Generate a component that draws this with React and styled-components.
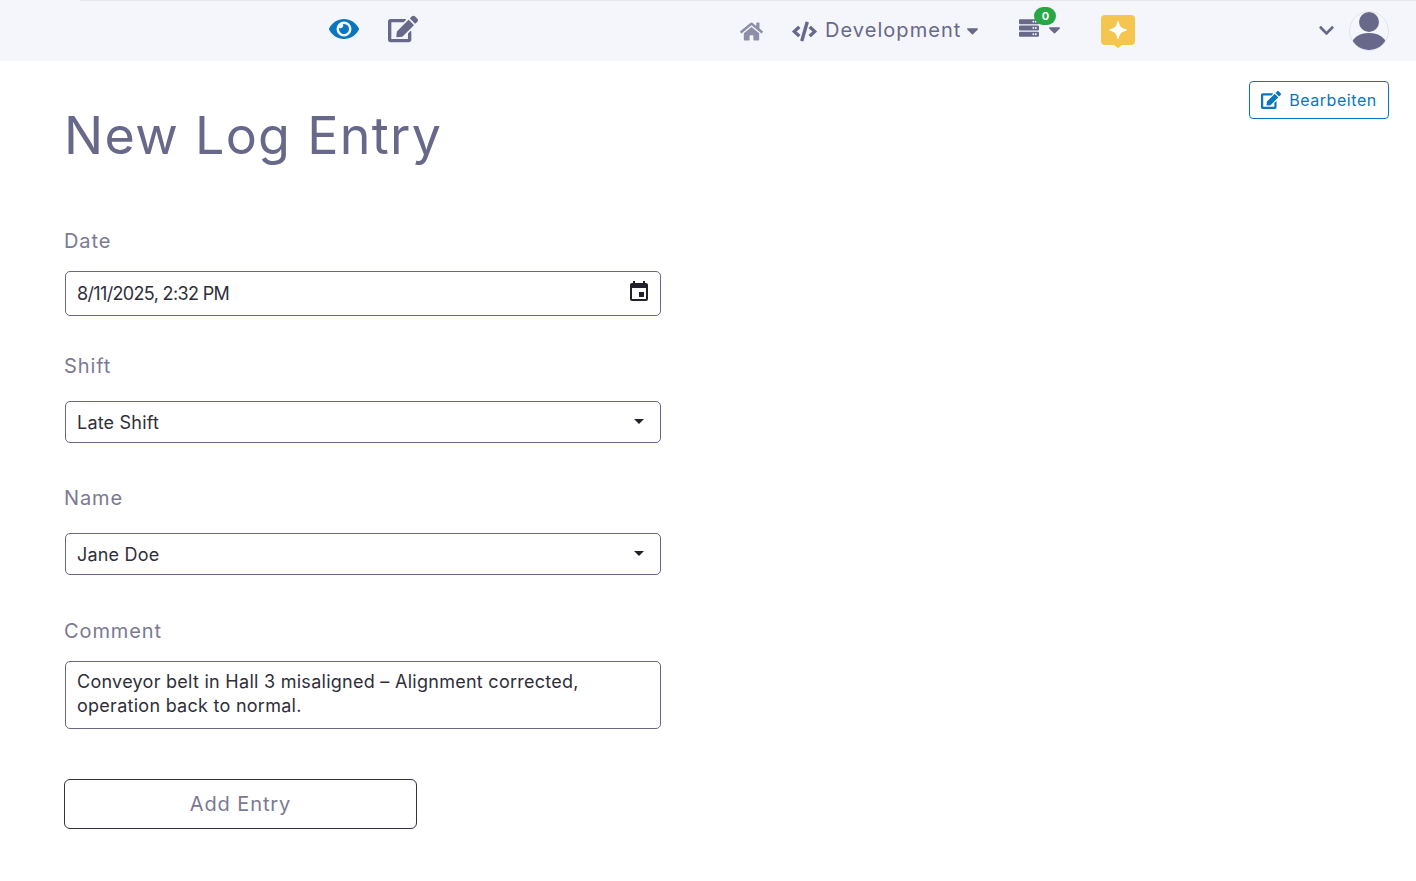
import React from "react";
import styled, {createGlobalStyle} from "styled-components";
import {FaEye, FaEdit, FaHome, FaCode, FaServer, FaCaretDown, FaChevronDown} from "react-icons/fa";
import {MdEvent} from "react-icons/md";

const FONT = `"Inter", "Liberation Sans", sans-serif`;

const GlobalStyle = createGlobalStyle`
  html, body {
    margin: 0;
    padding: 0;
    background: #fff;
    font-family: ${FONT};
  }
`;

const TopBar = styled.header`
  height: 61px;
  box-sizing: border-box;
  background: #f4f6fb;
  display: flex;
  align-items: center;
  color: #68688a;
  position: relative;
  padding-left: 329px;

  &::before {
    content: "";
    position: absolute;
    top: 0;
    left: 80px;
    right: 0;
    height: 1px;
    background: #e6e7ec;
  }
`;

const BarIcon = styled.span`
  display: flex;
  align-items: center;
  margin-left: ${p => p.$left || 0}px;
  font-size: ${p => p.$size}px;
  color: ${p => p.$color || "#68688a"};
  position: relative;
  top: ${p => p.$top || 0}px;
`;

const EnvName = styled.span`
  margin-left: 8px;
  font-size: 20px;
  font-weight: 400;
  letter-spacing: 1.05px;
  color: #68688a;
  position: relative;
  top: -1px;
`;

const Badge = styled.span`
  position: absolute;
  left: 15px;
  top: -11px;
  width: 22px;
  height: 18px;
  border-radius: 9px;
  background: #28a745;
  color: #fff;
  font-size: 11px;
  font-weight: 700;
  display: flex;
  align-items: center;
  justify-content: center;
`;

const Avatar = styled.span`
  width: 40px;
  height: 40px;
  box-sizing: border-box;
  border: 1px solid #e4e5ec;
  border-radius: 50%;
  overflow: hidden;
  margin-left: 14px;
  display: block;
  svg { display: block; }
`;

const Main = styled.main`
  display: flex;
  align-items: flex-start;
  padding: 20px 27px 0 64px;
`;

const FormColumn = styled.form`
  width: 597px;
  display: flex;
  flex-direction: column;
`;

const Title = styled.h1`
  margin: 21px 0 0 0;
  font-size: 52px;
  line-height: 68px;
  font-weight: 400;
  letter-spacing: 1.3px;
  color: #68688a;
`;

const Label = styled.label`
  display: block;
  margin-top: ${p => p.$top}px;
  margin-bottom: ${p => p.$bottom}px;
  font-size: 20px;
  line-height: 26px;
  letter-spacing: 0.9px;
  color: #7a7a94;
`;

const FieldWrap = styled.div`
  position: relative;
  margin-left: 1px;
`;

const fieldCss = `
  display: block;
  width: 100%;
  box-sizing: border-box;
  border: 1px solid #68688a;
  border-radius: 5px;
  background: #fff;
  padding: 0 11px;
  font-family: ${FONT};
  font-size: 18px;
  letter-spacing: 0.2px;
  color: #2f2f3a;
  outline: none;
`;

const TextInput = styled.input`
  ${fieldCss}
  height: 45px;
  letter-spacing: -0.65px;
`;

const Select = styled.select`
  ${fieldCss}
  height: 42px;
  appearance: none;
`;

const Comment = styled.textarea`
  ${fieldCss}
  height: 68px;
  padding: 8px 11px;
  line-height: 24px;
  letter-spacing: 0.27px;
  resize: none;
  overflow: hidden;
`;

const FieldIcon = styled.span`
  position: absolute;
  right: 10px;
  top: 9px;
  display: flex;
  font-size: 24px;
  color: #22222c;
  pointer-events: none;
`;

const Caret = styled.span`
  position: absolute;
  right: 17px;
  top: 18px;
  width: 0;
  height: 0;
  border-left: 5.5px solid transparent;
  border-right: 5.5px solid transparent;
  border-top: 5.5px solid #22222c;
  pointer-events: none;
`;

const AddButton = styled.button`
  width: 353px;
  height: 50px;
  margin-top: 50px;
  box-sizing: border-box;
  border: 1px solid #33333d;
  border-radius: 6px;
  background: #fff;
  font-family: ${FONT};
  font-size: 20px;
  letter-spacing: 0.9px;
  color: #7a7a94;
`;

const EditButton = styled.button`
  margin-left: auto;
  width: 140px;
  height: 38px;
  box-sizing: border-box;
  display: flex;
  align-items: center;
  justify-content: center;
  gap: 8px;
  border: 1px solid #0a76bd;
  border-radius: 4px;
  background: #fff;
  color: #0a76bd;
  font-family: ${FONT};
  font-size: 16px;
  letter-spacing: 0.55px;
  svg { font-size: 20px; }
`;

const Sparkle = () => (
    <svg width="36" height="34" viewBox="0 0 36 34">
        <path d="M5 1h26a4 4 0 0 1 4 4v22a4 4 0 0 1-4 4h-9l-4 3-4-3H5a4 4 0 0 1-4-4V5a4 4 0 0 1 4-4z" fill="#f5c64f"/>
        <path d="M18 8c.8 4.500 2.500 6.700 8 8-5.500 1.300-7.200 3.500-8 8-.8-4.500-2.500-6.700-8-8 5.500-1.300 7.200-3.500 8-8z" fill="#fff" stroke="#fff" strokeWidth="1.500" strokeLinejoin="round"/>
    </svg>
);

const UserFigure = () => (
    <svg width="38" height="38" viewBox="0 0 38 38">
        <circle cx="19" cy="10" r="10" fill="#68688a"/>
        <ellipse cx="19" cy="32" rx="17" ry="11" fill="#68688a"/>
    </svg>
);

const App = () => {
    return (
        <>
            <GlobalStyle/>
            <TopBar>
                <BarIcon $size={30} $color="#0a76bd" $top={-2}><FaEye/></BarIcon>
                <BarIcon $size={30} $left={29} $top={-2}><FaEdit/></BarIcon>
                <BarIcon $size={23} $left={322} $color="#8e8eaa" $top={1}><FaHome/></BarIcon>
                <BarIcon $size={25} $left={29} $top={1}><FaCode/></BarIcon>
                <EnvName>Development</EnvName>
                <BarIcon $size={19} $left={2} $top={0}><FaCaretDown/></BarIcon>
                <BarIcon $size={20} $left={37} $top={-3}>
                    <FaServer/>
                    <Badge>0</Badge>
                </BarIcon>
                <BarIcon $size={19} $left={6} $top={-1}><FaCaretDown/></BarIcon>
                <BarIcon $size={34} $left={36} $top={0}><Sparkle/></BarIcon>
                <BarIcon $size={17} $left={182} $top={0}><FaChevronDown/></BarIcon>
                <Avatar><UserFigure/></Avatar>
            </TopBar>
            <Main>
                <FormColumn>
                    <Title>New Log Entry</Title>
                    <Label $top={58} $bottom={17}>Date</Label>
                    <FieldWrap>
                        <TextInput defaultValue="8/11/2025, 2:32 PM"/>
                        <FieldIcon><MdEvent/></FieldIcon>
                    </FieldWrap>
                    <Label $top={37} $bottom={22}>Shift</Label>
                    <FieldWrap>
                        <Select defaultValue="Late Shift">
                            <option>Late Shift</option>
                            <option>Early Shift</option>
                        </Select>
                        <Caret/>
                    </FieldWrap>
                    <Label $top={42} $bottom={22}>Name</Label>
                    <FieldWrap>
                        <Select defaultValue="Jane Doe">
                            <option>Jane Doe</option>
                        </Select>
                        <Caret/>
                    </FieldWrap>
                    <Label $top={43} $bottom={17}>Comment</Label>
                    <FieldWrap>
                        <Comment defaultValue={"Conveyor belt in Hall 3 misaligned – Alignment corrected,\noperation back to normal."}/>
                    </FieldWrap>
                    <AddButton type="button">Add Entry</AddButton>
                </FormColumn>
                <EditButton type="button"><FaEdit/>Bearbeiten</EditButton>
            </Main>
        </>
    );
}

export default App;
